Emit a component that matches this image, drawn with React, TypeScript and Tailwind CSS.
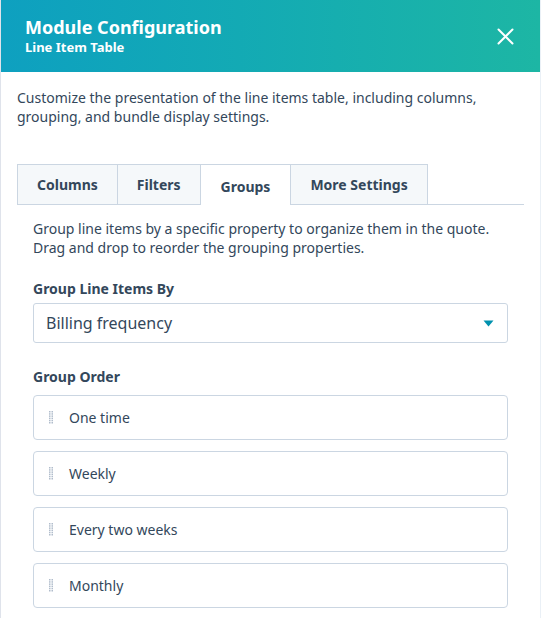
import React from 'react';

const tabs = ['Columns', 'Filters', 'Groups', 'More Settings'];
const groups = ['One time', 'Weekly', 'Every two weeks', 'Monthly'];

function DragHandle() {
    const dots = [];
    for (let r = 0; r < 6; r++) {
        for (let c = 0; c < 2; c++) {
            dots.push(<rect key={`${r}-${c}`} x={c * 2.5} y={r * 2.2} width="1.5" height="1.5" fill="#b0bccb" />);
        }
    }
    return (
        <svg width="4" height="13" viewBox="0 0 4 13" className="shrink-0">
            {dots}
        </svg>
    );
}

export default function App() {
    return (
        <div
            className="w-[543px] h-[618px] overflow-hidden bg-white border-l border-[#dfe3eb] text-[#33475b]"
            style={{ fontFamily: '"Noto Sans", Lato, sans-serif' }}
        >
            <div className="w-[540px] h-full border-r border-[#eaf0f6]">
                {/* Header */}
                <div className="h-[72px] bg-gradient-to-r from-[#0ea0c0] to-[#1db6a4] flex items-center justify-between pl-[24px] pr-[26px]">
                    <div className="flex flex-col text-white">
                        <span className="text-[18px] font-bold leading-[22px]">Module Configuration</span>
                        <span className="text-[13px] font-bold leading-[18px]">Line Item Table</span>
                    </div>
                    <svg width="17" height="17" viewBox="0 0 17 17" fill="none" stroke="white" strokeWidth="2" strokeLinecap="round">
                        <path d="M1.5 1.5 L15.5 15.5 M15.5 1.5 L1.5 15.5" />
                    </svg>
                </div>

                {/* Body */}
                <div className="px-[16px] pt-[16px]">
                    <p className="text-[14px] leading-[19px]">
                        Customize the presentation of the line items table, including columns, grouping, and bundle display settings.
                    </p>

                    {/* Tabs */}
                    <div className="mt-[38px] flex items-end border-b border-[#cbd6e2]">
                        {tabs.map((t) => {
                            const active = t === 'Groups';
                            return (
                                <div
                                    key={t}
                                    className={
                                        active
                                            ? 'h-[41px] -mb-px -ml-px px-[20px] flex items-center pt-[2px] bg-white border border-b-0 border-[#cbd6e2] text-[14px] font-bold'
                                            : 'h-[40px] px-[19px] flex items-center bg-[#f5f8fa] border border-b-0 border-[#cbd6e2] -ml-px first:ml-0 text-[14px] font-bold'
                                    }
                                >
                                    {t}
                                </div>
                            );
                        })}
                    </div>

                    {/* Tab content */}
                    <div className="px-[16px] pt-[14px]">
                        <p className="text-[14px] leading-[19px]">
                            Group line items by a specific property to organize them in the quote. Drag and drop to reorder the grouping properties.
                        </p>

                        <div className="mt-[23px] text-[14px] font-bold leading-[18px]">Group Line Items By</div>
                        <div className="mt-[5px] h-[40px] border border-[#cbd6e2] rounded-[3px] bg-white flex items-center justify-between pl-[12px] pr-[13px]">
                            <span className="text-[16px]">Billing frequency</span>
                            <svg width="11" height="7" viewBox="0 0 11 7">
                                <path d="M0.5 0.5 H10.5 L5.5 6.5 Z" fill="#0091ae" />
                            </svg>
                        </div>

                        <div className="mt-[25px] text-[14px] font-bold leading-[18px]">Group Order</div>
                        <div className="mt-[9px] flex flex-col gap-[11px]">
                            {groups.map((g) => (
                                <div
                                    key={g}
                                    className="h-[45px] border border-[#cbd6e2] rounded-[4px] bg-white flex items-center gap-[16px] pl-[15px]"
                                >
                                    <DragHandle />
                                    <span className="text-[14px]">{g}</span>
                                </div>
                            ))}
                        </div>
                    </div>
                </div>
            </div>
        </div>
    );
}
